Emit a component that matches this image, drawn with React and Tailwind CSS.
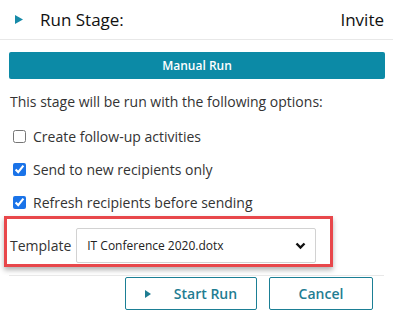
import React from 'react'

const Check = ({ checked, label }) => (
  <label className="flex items-center h-[33px] pl-[13px] gap-[7px] text-[14px] text-[#333]">
    <input type="checkbox" defaultChecked={checked} className="w-[13px] h-[13px] m-0 accent-[#1a73e8]" />
    <span>{label}</span>
  </label>
)

const App = () => {
  return (
    <div className="w-[393px] h-[324px] bg-white overflow-hidden font-['Open_Sans',sans-serif]">
      {/* header */}
      <div className="flex items-center h-[40px] border-b border-[#e8e8e8] pl-[15px] pr-[9px]">
        <svg width="8" height="9" viewBox="0 0 8 9" className="mr-[17px]">
          <path d="M0 0 L8 4.5 L0 9 Z" fill="#178aa8" />
        </svg>
        <span className="text-[17px] text-[#111]">Run Stage:</span>
        <span className="ml-auto text-[17px] text-[#111]">Invite</span>
      </div>

      <button className="mt-[12px] mx-[9px] w-[376px] h-[27px] rounded-[2px] bg-[#0c8aa6] text-white text-[12px] font-semibold">
        Manual Run
      </button>

      <p className="mt-[13px] pl-[10px] text-[14px] leading-[20px] text-[#333]">
        This stage will be run with the following options:
      </p>

      <div className="mt-[8px]">
        <Check label="Create follow-up activities" />
        <Check checked label="Send to new recipients only" />
        <Check checked label="Refresh recipients before sending" />
      </div>

      {/* highlighted template row */}
      <div className="ml-[4px] mt-[-3px] w-[329px] h-[51px] border-[3px] border-[#e8474b] shadow-[0_3px_5px_rgba(0,0,0,0.3)] flex items-start pt-[9px] pl-[3px]">
        <span className="mt-[9px] text-[14px] leading-[18px] text-[#333]">Template</span>
        <div className="ml-[5px] w-[240px] h-[35px] border border-[#d2d2d2] rounded-[2px] flex items-center pl-[10px] pr-[9px] bg-white">
          <span className="text-[12px] text-[#222]">IT Conference 2020.dotx</span>
          <svg width="11" height="8" viewBox="0 0 11 8" className="ml-auto">
            <path d="M1.5 1.5 L5.5 5.5 L9.5 1.5" stroke="#111" strokeWidth="2.4" fill="none" />
          </svg>
        </div>
      </div>

      <div className="mt-[8px] mx-[9px] border-t border-[#e8e8e8]" />

      <div className="flex justify-end gap-[12px] pr-[20px] mt-[1px]">
        <button className="w-[132px] h-[33px] border border-[#1b7f95] rounded-[2px] flex items-center justify-center gap-[23px] text-[#1f7d92] text-[14px] font-semibold">
          <svg width="6" height="8" viewBox="0 0 6 8">
            <path d="M0 0 L6 4 L0 8 Z" fill="#1f7d92" />
          </svg>
          <span>Start Run</span>
        </button>
        <button className="w-[104px] h-[33px] border border-[#1b7f95] rounded-[2px] text-[#1f7d92] text-[14px] font-semibold">
          Cancel
        </button>
      </div>
    </div>
  )
}

export default App
